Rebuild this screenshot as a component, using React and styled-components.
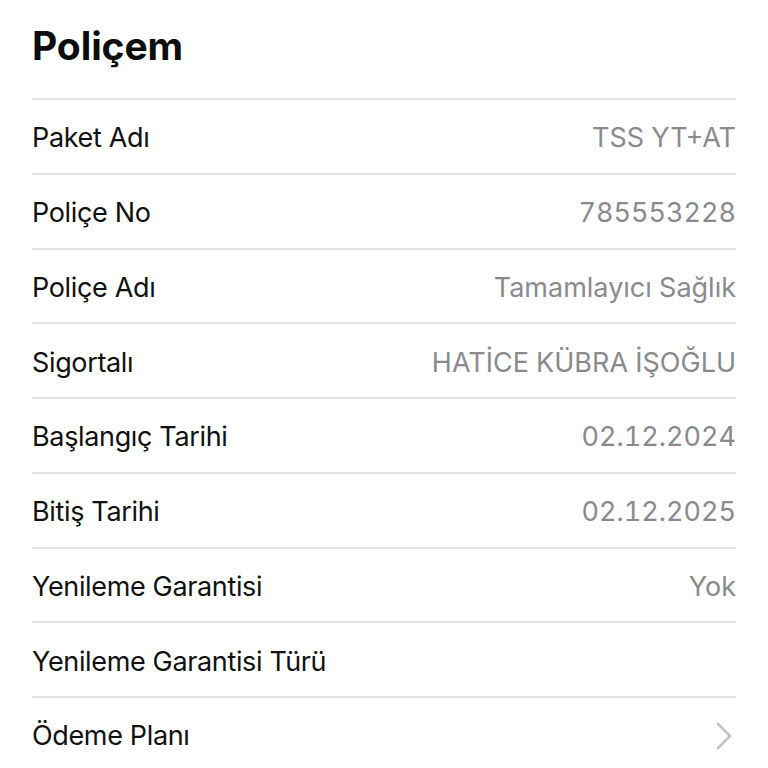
import React from "react";
import styled, { createGlobalStyle } from "styled-components";

const Global = createGlobalStyle`
  html, body { margin: 0; padding: 0; background: #fff; }
  body { font-family: Inter, "Noto Sans", sans-serif; -webkit-font-smoothing: antialiased; }
`;

const Page = styled.div`
  padding: 0 32px;
  background: #fff;
`;

const Title = styled.h1`
  margin: 0;
  height: 98px;
  box-sizing: border-box;
  padding-top: 22px;
  font-size: 39px;
  line-height: 48px;
  font-weight: 700;
  color: #0d0d0d;
  letter-spacing: -0.1px;
`;

const List = styled.div`
  display: flex;
  flex-direction: column;
`;

const Row = styled.div`
  height: 74.75px;
  box-sizing: border-box;
  border-top: 2px solid #e3e3e5;
  padding-top: 3px;
  display: flex;
  align-items: center;
  justify-content: space-between;
  font-size: 27px;
`;

const Label = styled.span`
  color: #111;
  letter-spacing: -0.35px;
`;

const Value = styled.span`
  color: #8a8a8e;
  letter-spacing: 0;
  font-variant-numeric: tabular-nums;
`;

const Chevron = styled.svg`
  width: 18px;
  height: 28px;
  margin-right: 3px;
`;

const rows = [
  ["Paket Adı", "TSS YT+AT"],
  ["Poliçe No", "785553228"],
  ["Poliçe Adı", "Tamamlayıcı Sağlık"],
  ["Sigortalı", "HATİCE KÜBRA İŞOĞLU"],
  ["Başlangıç Tarihi", "02.12.2024"],
  ["Bitiş Tarihi", "02.12.2025"],
  ["Yenileme Garantisi", "Yok"],
  ["Yenileme Garantisi Türü", ""],
];

export default function App() {
  return (
    <Page>
      <Global />
      <Title>Poliçem</Title>
      <List>
        {rows.map(([l, v]) => (
          <Row key={l}>
            <Label>{l}</Label>
            <Value>{v}</Value>
          </Row>
        ))}
        <Row>
          <Label>Ödeme Planı</Label>
          <Chevron viewBox="0 0 18 28">
            <path d="M3 2 L15 14 L3 26" fill="none" stroke="#c4c4c8" strokeWidth="2.6" strokeLinecap="round" strokeLinejoin="round" />
          </Chevron>
        </Row>
      </List>
    </Page>
  );
}
